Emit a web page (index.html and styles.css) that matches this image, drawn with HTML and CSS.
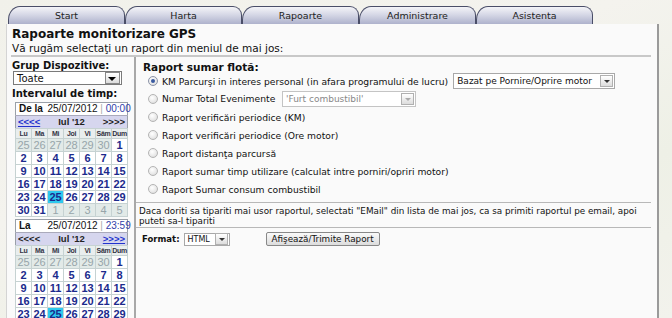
FILE: index.html
```html
<!DOCTYPE html>
<html lang="ro">

<head>
    <meta charset="UTF-8">
    <title>Rapoarte monitorizare GPS</title>
    <link rel="stylesheet" href="styles.css">
</head>

<body>
    <!-- Tab menu -->
    <div class="tabs">
        <div class="tab">Start</div>
        <div class="tab">Harta</div>
        <div class="tab">Rapoarte</div>
        <div class="tab">Administrare</div>
        <div class="tab">Asistenta</div>
    </div>

    <div class="panel">
        <div class="page-head">
            <h1>Rapoarte monitorizare GPS</h1>
            <p>Vă rugăm selectaţi un raport din meniul de mai jos:</p>
        </div>
        <div class="rule"></div>

        <div class="content">
            <!-- Left column: devices and time interval -->
            <div class="sidebar">
                <div class="label side-label">Grup Dispozitive:</div>
                <div class="select group-select">
                    <span class="select-text">Toate</span>
                    <span class="select-btn dark"></span>
                </div>
                <div class="label side-label interval">Intervalul de timp:</div>

                <table class="cal">
                    <tr class="cal-head">
                        <td colspan="2" class="cal-title">De la</td>
                        <td colspan="5" class="cal-date">25/07/2012 <span class="sep">|</span> <span class="time">00:00</span></td>
                    </tr>
                    <tr class="cal-nav">
                        <td colspan="2"><a class="nav-link">&lt;&lt;&lt;&lt;</a></td>
                        <td colspan="3" class="month">Iul '12</td>
                        <td colspan="2" class="right"><span class="nav-off">&gt;&gt;&gt;&gt;</span></td>
                    </tr>
                    <tr class="cal-days">
                        <td>Lu</td><td>Ma</td><td>Mi</td><td>Joi</td><td>Vi</td><td>Sâm</td><td>Dum</td>
                    </tr>
                    <tr><td class="other">25</td><td class="other">26</td><td class="other">27</td><td class="other">28</td><td class="other">29</td><td class="other">30</td><td>1</td></tr>
                    <tr><td>2</td><td>3</td><td>4</td><td>5</td><td>6</td><td>7</td><td>8</td></tr>
                    <tr><td>9</td><td>10</td><td>11</td><td>12</td><td>13</td><td>14</td><td>15</td></tr>
                    <tr><td>16</td><td>17</td><td>18</td><td>19</td><td>20</td><td>21</td><td>22</td></tr>
                    <tr><td>23</td><td>24</td><td class="today">25</td><td>26</td><td>27</td><td>28</td><td>29</td></tr>
                    <tr><td>30</td><td>31</td><td class="other">1</td><td class="other">2</td><td class="other">3</td><td class="other">4</td><td class="other">5</td></tr>
                </table>

                <table class="cal">
                    <tr class="cal-head">
                        <td colspan="2" class="cal-title">La</td>
                        <td colspan="5" class="cal-date">25/07/2012 <span class="sep">|</span> <span class="time">23:59</span></td>
                    </tr>
                    <tr class="cal-nav">
                        <td colspan="2"><span class="nav-off">&lt;&lt;&lt;&lt;</span></td>
                        <td colspan="3" class="month">Iul '12</td>
                        <td colspan="2" class="right"><a class="nav-link">&gt;&gt;&gt;&gt;</a></td>
                    </tr>
                    <tr class="cal-days">
                        <td>Lu</td><td>Ma</td><td>Mi</td><td>Joi</td><td>Vi</td><td>Sâm</td><td>Dum</td>
                    </tr>
                    <tr><td class="other">25</td><td class="other">26</td><td class="other">27</td><td class="other">28</td><td class="other">29</td><td class="other">30</td><td>1</td></tr>
                    <tr><td>2</td><td>3</td><td>4</td><td>5</td><td>6</td><td>7</td><td>8</td></tr>
                    <tr><td>9</td><td>10</td><td>11</td><td>12</td><td>13</td><td>14</td><td>15</td></tr>
                    <tr><td>16</td><td>17</td><td>18</td><td>19</td><td>20</td><td>21</td><td>22</td></tr>
                    <tr><td>23</td><td>24</td><td class="today">25</td><td>26</td><td>27</td><td>28</td><td>29</td></tr>
                    <tr><td>30</td><td>31</td><td class="other">1</td><td class="other">2</td><td class="other">3</td><td class="other">4</td><td class="other">5</td></tr>
                </table>
            </div>

            <!-- Right column: report list -->
            <div class="main">
                <div class="label main-label">Raport sumar flotă:</div>
                <div class="options">
                    <div class="option first">
                        <span class="radio checked"></span>
                        <span class="opt-text">KM Parcurşi in interes personal (in afara programului de lucru)</span>
                        <div class="select mode-select">
                            <span class="select-text">Bazat pe Pornire/Oprire motor</span>
                            <span class="select-btn"></span>
                        </div>
                    </div>
                    <div class="option tall">
                        <span class="radio"></span>
                        <span class="opt-text events">Numar Total Evenimente</span>
                        <div class="select event-select disabled">
                            <span class="select-text">'Furt combustibil'</span>
                            <span class="select-btn"></span>
                        </div>
                    </div>
                    <div class="option"><span class="radio"></span><span class="opt-text">Raport verificări periodice (KM)</span></div>
                    <div class="option"><span class="radio"></span><span class="opt-text">Raport verificări periodice (Ore motor)</span></div>
                    <div class="option"><span class="radio"></span><span class="opt-text">Raport distanţa parcursă</span></div>
                    <div class="option"><span class="radio"></span><span class="opt-text">Raport sumar timp utilizare (calculat intre porniri/opriri motor)</span></div>
                    <div class="option"><span class="radio"></span><span class="opt-text">Raport Sumar consum combustibil</span></div>
                </div>

                <div class="rule thin"></div>
                <div class="note">Daca doriti sa tipariti mai usor raportul, selectati "EMail" din lista de mai jos, ca sa primiti raportul pe email, apoi puteti sa-l tipariti</div>
                <div class="rule thin"></div>

                <div class="format-row">
                    <span class="label format-label">Format:</span>
                    <div class="select format-select">
                        <span class="select-text">HTML</span>
                        <span class="select-btn"></span>
                    </div>
                    <button class="submit">Afişează/Trimite Raport</button>
                </div>
            </div>
        </div>
    </div>
</body>

</html>
```
FILE: styles.css
```css
/* General */
body {
    margin: 0;
    padding: 0;
    height: 318px;
    overflow: hidden;
    font-family: "DejaVu Sans", Verdana, sans-serif;
    font-size: 9px;
    color: #111;
    background: linear-gradient(160deg, #f1f1ea 0%, #f4f3ee 40%, #eef0e6 70%, #f2f2ec 100%);
}

/* Tabs */
.tabs {
    display: flex;
    padding: 6px 0 0 8px;
    height: 18px;
}

.tab {
    width: 115px;
    height: 17px;
    line-height: 17px;
    text-align: center;
    font-size: 9.5px;
    color: #222;
    border: 1px solid #4a4e68;
    border-bottom: none;
    border-radius: 12px 9px 0 0 / 14px 9px 0 0;
    background: linear-gradient(to bottom, #f4f4f8 0%, #d6d8e6 45%, #aeb2cc 100%);
}

/* Main panel */
.panel {
    margin-left: 6px;
    width: 650px;
    height: 294px;
    background-color: #fafafa;
    border-left: 1px solid #d4d4d4;
    border-right: 2px solid #9a9a9a;
}

.page-head {
    padding: 3px 6px 0 5px;
}

h1 {
    margin: 0;
    font-size: 12px;
    font-weight: bold;
    line-height: 15px;
}

.page-head p {
    margin: 0;
    font-size: 10.5px;
    line-height: 12px;
}

.rule {
    height: 0;
    border-top: 2px solid #c8c8c8;
    margin: 1px 6px 0 4px;
}

.rule.thin {
    border-top: 1px solid #b8b8b8;
    margin: 0 6px 0 0;
}

.content {
    display: flex;
}

/* Left column */
.sidebar {
    width: 122px;
    padding: 3px 0 0 5px;
    border-right: 2px solid #a8a8a8;
    height: 262px;
    overflow: hidden;
}

.label {
    font-weight: bold;
    line-height: 11px;
}

.side-label {
    font-size: 10px;
}

.interval {
    margin-top: 3px;
}

.select {
    display: flex;
    align-items: center;
    border: 1px solid #a8a8a8;
    background-color: #fff;
    height: 12px;
    font-size: 9px;
}

.select-text {
    flex: 1;
    padding-left: 3px;
    white-space: nowrap;
    overflow: hidden;
}

.select-btn {
    width: 11px;
    height: 10px;
    margin-right: 1px;
    border: 1px solid #b0b0b0;
    background: linear-gradient(to bottom, #ffffff, #dcdcdc);
    position: relative;
}

.select-btn::after {
    content: "";
    position: absolute;
    left: 3px;
    top: 4px;
    border-left: 3px solid transparent;
    border-right: 3px solid transparent;
    border-top: 3px solid #333;
}

.group-select {
    width: 107px;
    height: 12px;
    margin: 0 0 0 1px;
    border-color: #7a7a7a;
    font-size: 10px;
}

.select-btn.dark {
    width: 13px;
    border-color: #888;
}

.select-btn.dark::after {
    left: 2px;
    border-left-width: 4px;
    border-right-width: 4px;
    border-top-width: 4px;
    border-top-color: #000;
}

/* Calendars */
.cal {
    margin: 3px 0 0 3px;
    border-collapse: collapse;
    border: 1px solid #9aa0a8;
    font-family: "Liberation Sans", Arial, sans-serif;
    width: 113px;
    table-layout: fixed;
}

.cal + .cal {
    margin-top: 2px;
}

.cal td {
    height: 12px;
    padding: 0;
    text-align: center;
    border: 1px solid #c6d2d2;
    background-color: #fff;
    color: #1b2a8c;
    font-weight: bold;
    font-size: 11px;
    line-height: 12px;
    white-space: nowrap;
}

.cal td.other {
    background-color: #e2eae8;
    color: #97a5aa;
    font-weight: normal;
}

.cal td.today {
    background-color: #2ec8ee;
}

.cal-head td {
    color: #111;
    font-weight: normal;
    font-size: 10px;
    border: none;
    border-bottom: 1px solid #aab;
}

.cal-head .cal-title {
    text-align: left;
    padding-left: 3px;
    font-weight: bold;
}

.cal-head .cal-date {
    text-align: right;
    padding-right: 1px;
}

.sep {
    color: #aaa;
}

.time {
    color: #3040a8;
}

.cal-nav td {
    background-color: #d6d6ee;
    border: none;
    font-size: 9.5px;
    color: #222;
    text-align: left;
    padding-left: 2px;
}

.cal-nav td.month {
    text-align: center;
    padding: 0;
}

.cal-nav td.right {
    text-align: right;
    padding-right: 2px;
}

.nav-link {
    color: #2233cc;
    text-decoration: underline;
}

.nav-off {
    color: #222;
}

.cal-days td {
    font-size: 7px;
    color: #334;
    background-color: #e9eeee;
    height: 9px;
    line-height: 9px;
    letter-spacing: -0.3px;
    overflow: visible;
}

/* Right column */
.main {
    flex: 1;
    padding: 5px 0 0 0;
}

.main-label {
    font-size: 10.5px;
    padding-left: 7px;
}

.options {
    padding: 0 0 4px 12px;
}

.option {
    display: flex;
    align-items: center;
    height: 18px;
}

.option.first {
    height: 16px;
}

.option.tall {
    height: 19px;
}

.radio {
    width: 10px;
    height: 10px;
    border-radius: 50%;
    border: 1px solid #b4b4b4;
    background: radial-gradient(circle at 40% 35%, #ffffff 0%, #e8e8e8 60%, #cfcfcf 100%);
    margin-right: 4px;
    box-sizing: border-box;
    position: relative;
}

.radio.checked {
    border-color: #8c94a8;
}

.radio.checked::after {
    content: "";
    position: absolute;
    left: 2px;
    top: 2px;
    width: 4px;
    height: 4px;
    border-radius: 50%;
    background-color: #3a5aa0;
}

.opt-text {
    white-space: nowrap;
    font-size: 9.2px;
}

.mode-select {
    width: 160px;
    margin-left: 5px;
    height: 14px;
}

.events {
    width: 120px;
}

.event-select {
    width: 132px;
    height: 14px;
}

.select.disabled {
    color: #888;
    border-color: #c4c4c4;
}

.select.disabled .select-btn::after {
    border-top-color: #aaa;
}

.note {
    font-size: 8.8px;
    line-height: 10px;
    padding: 3px 0 1px 3px;
}

.format-row {
    display: flex;
    align-items: center;
    padding: 4px 0 0 6px;
}

.format-label {
    font-size: 8.5px;
}

.format-select {
    width: 44px;
    margin-left: 4px;
    height: 11px;
    font-size: 8px;
}

.submit {
    margin-left: 36px;
    font-family: "DejaVu Sans", Verdana, sans-serif;
    font-size: 8.8px;
    padding: 0 5px;
    height: 14px;
    border: 1px solid #888;
    border-radius: 2px;
    background: linear-gradient(to bottom, #fafafa, #dcdcdc);
    color: #111;
}
```
